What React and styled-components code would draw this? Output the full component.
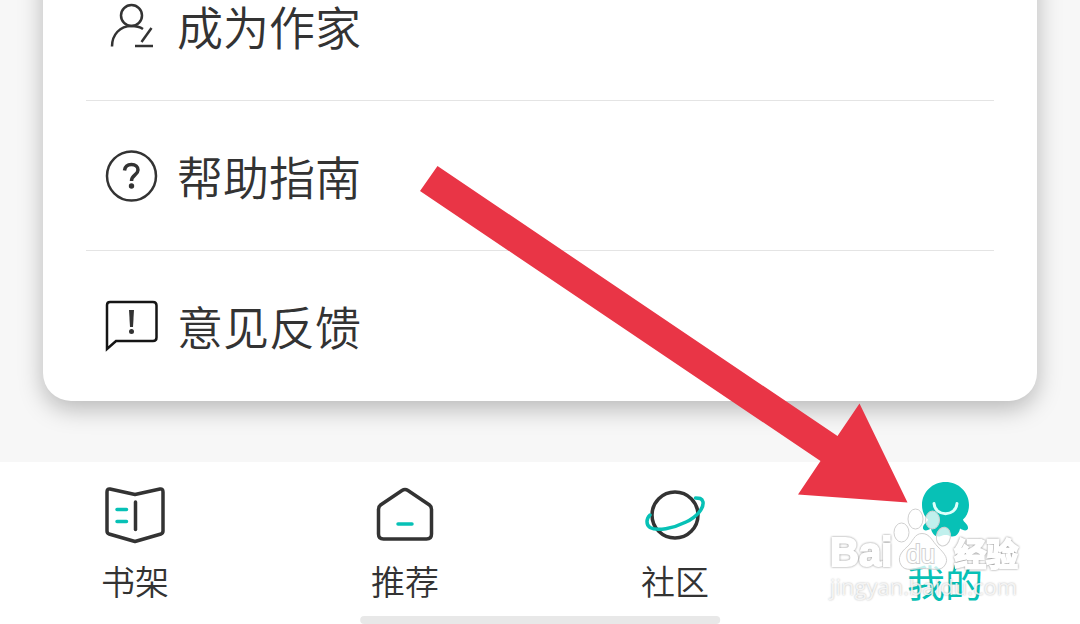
import React from "react";
import styled, { createGlobalStyle } from "styled-components";

const App = () => {
  return (
    <Page>
      <GlobalStyle />

      <Main>
        <Card>
          {menu.map((item) => (
            <MenuRow key={item.label} href="#">
              {item.icon}
              <MenuLabel>{item.label}</MenuLabel>
            </MenuRow>
          ))}
        </Card>
      </Main>

      <TabBar>
        {tabs.map((tab) => (
          <Tab key={tab.label} href="#" $active={tab.active}>
            {tab.icon}
            <span>{tab.label}</span>
          </Tab>
        ))}
        <HomeIndicator />
      </TabBar>

      <Arrow viewBox="0 0 488 340" aria-hidden="true">
        <path d="M17.500 0 L417.500 270 L439.500 237.500 L487.500 336.500 L378 328.500 L400.500 295 L0 25 Z" />
      </Arrow>

      <Watermark>
        <Brand>
          <BrandText>Bai</BrandText>
          <Paw>
            <svg viewBox="0 0 52 64" aria-hidden="true">
              <ellipse cx="9.500" cy="24.500" rx="7.500" ry="9.500" />
              <ellipse cx="23.500" cy="11" rx="7.500" ry="10" />
              <ellipse cx="40.500" cy="12" rx="7" ry="9" />
              <ellipse cx="51.500" cy="28.500" rx="7" ry="9.500" transform="rotate(10 51 28)" />
              <path d="M30 25.500 C38 25.500 40 33 46 39 C53 46 57 51 53 57 C49 64 40 60.500 31 60.500 C22 60.500 13 64 9 57 C5 50 9 44 15 39 C21 34 22 25.500 30 25.500 Z" />
            </svg>
            <span>du</span>
          </Paw>
          <BrandText $cjk>经验</BrandText>
        </Brand>
        <Site>jingyan.baidu.com</Site>
      </Watermark>
    </Page>
  );
};

export default App;

const AuthorIcon = () => (
  <LineIcon viewBox="0 0 52 52">
    <circle cx="25.500" cy="15.500" r="10.500" />
    <path d="M6 46.500 C6 34.500 14 26 25.500 26 C30 26 34 27 37 29" />
    <path d="M45.500 28 L35.500 42" />
    <path d="M29 46 H47" />
  </LineIcon>
);

const HelpIcon = () => (
  <LineIcon viewBox="0 0 52 52">
    <circle cx="25.500" cy="26" r="24.500" />
    <path
      d="M18.500 20.500 C19 16.500 22 14.500 25.500 14.500 C29.500 14.500 32 17 32 20 C32 25 25.500 25 25.500 31"
      strokeWidth="3.500"
    />
    <circle cx="25.500" cy="36" r="2.700" fill="#333" stroke="none" />
  </LineIcon>
);

const FeedbackIcon = () => (
  <LineIcon viewBox="0 0 52 52">
    <path
      d="M1 49 V5 Q1 2 4 2 H47 Q50.500 2 50.500 5.500 V37.500 Q50.500 41 47 41 H10 Z"
      stroke="#151515"
      strokeLinejoin="miter"
    />
    <path d="M23 10 H28 L27 27 H24 Z" fill="#333" stroke="none" />
    <circle cx="25.500" cy="31.500" r="2.500" fill="#333" stroke="none" />
  </LineIcon>
);

const ShelfIcon = () => (
  <TabIcon viewBox="0 0 64 64">
    <path d="M4 9 Q4 5.500 7 6 L32 11.500 L57 6 Q60 5.500 60 9 V48 Q60 50 58 51 L32 58.500 L6 51 Q4 50 4 48 Z" />
    <path d="M32.500 19 V46.500" />
    <path d="M14 26.500 H23.500 M14 38.500 H23.500" stroke={TEAL} />
  </TabIcon>
);

const HouseIcon = () => (
  <TabIcon viewBox="0 0 64 64">
    <path d="M29 7.500 Q32 5.500 35 7.500 L56.500 22 Q58.500 23.500 58.500 26.500 V51 Q58.500 56 53.500 56 H10.500 Q5.500 56 5.500 51 V26.500 Q5.500 23.500 7.500 22 Z" />
    <path d="M25 41 H39" stroke={TEAL} />
  </TabIcon>
);

const PlanetIcon = () => (
  <TabIcon viewBox="0 0 64 64">
    <circle cx="32" cy="32" r="23" />
    <path
      d="M7 32 C3 36 3 42 7 44.500 C14 48.500 30 45.500 43 39 C54 34 61 25 60 19 C59 15 56 15 52.500 15"
      stroke={TEAL}
    />
  </TabIcon>
);

const MascotIcon = () => (
  <TabIcon viewBox="0 0 64 64">
    <path
      d="M32.500 -1 C45.500 -1 56 9 56 22 C56 28 54 33 50 36.500 C50.500 39.500 55.500 41 55 45.500 C54 48.500 50 47.500 47 45.500 C46 51 42 55 37 53 C35 51.500 30 51.500 28 53 C23 55 19 51 18 45.500 C15 47.500 11 48.500 10 45.500 C9.500 41 14.500 39.500 15 36.500 C11 33 9 28 9 22 C9 9 19.500 -1 32.500 -1 Z"
      fill={TEAL}
      stroke="none"
    />
    <path d="M21 20.500 C22 34 43 34 44 20.500" stroke="#dcfffb" strokeWidth="3" />
  </TabIcon>
);

const TEAL = "#07c1b6";

const menu = [
  { label: "成为作家", icon: <AuthorIcon /> },
  { label: "帮助指南", icon: <HelpIcon /> },
  { label: "意见反馈", icon: <FeedbackIcon /> },
];

const tabs = [
  { label: "书架", icon: <ShelfIcon /> },
  { label: "推荐", icon: <HouseIcon /> },
  { label: "社区", icon: <PlanetIcon /> },
  { label: "我的", icon: <MascotIcon />, active: true },
];

const GlobalStyle = createGlobalStyle`
  * {
    box-sizing: border-box;
  }
  body {
    margin: 0;
    background: #f7f7f7;
    color: #333;
    font-family: "Noto Sans CJK SC", sans-serif;
    font-weight: 350;
  }
  a {
    color: inherit;
    text-decoration: none;
  }
`;

const Page = styled.div`
  position: relative;
  display: flex;
  flex-direction: column;
  height: 100vh;
  overflow: hidden;
`;

const Main = styled.main`
  flex: 1;
  min-height: 0;
  display: flex;
  flex-direction: column;
  justify-content: flex-end;
  padding: 0 43px 61px;
  overflow: hidden;
`;

const Card = styled.div`
  flex-shrink: 0;
  padding: 0 43px;
  background: #fff;
  border-radius: 28px;
  box-shadow: 0 8px 24px rgb(0 0 0 / 26%);
`;

const MenuRow = styled.a`
  display: flex;
  align-items: center;
  gap: 19px;
  height: 150px;
  padding-left: 20px;
  border-bottom: 1px solid #e4e4e4;
  &:last-child {
    border-bottom-color: transparent;
  }
`;

const MenuLabel = styled.span`
  padding-bottom: 2px;
  font-size: 46px;
  line-height: 60px;
`;

const LineIcon = styled.svg`
  width: 52px;
  height: 52px;
  overflow: visible;
  fill: none;
  stroke: #333;
  stroke-width: 2.5;
`;

const TabBar = styled.nav`
  position: relative;
  display: grid;
  grid-template-columns: repeat(4, 1fr);
  height: 162px;
  background: #fff;
`;

const Tab = styled.a`
  display: flex;
  flex-direction: column;
  align-items: center;
  gap: 10px;
  padding-top: 21px;
  color: ${({ $active }) => ($active ? TEAL : "#333")};
  font-size: ${({ $active }) => ($active ? "38px" : "34px")};
  font-weight: ${({ $active }) => ($active ? 400 : 350)};
  line-height: 48px;
`;

const TabIcon = styled.svg`
  width: 64px;
  height: 64px;
  overflow: visible;
  fill: none;
  stroke: #333;
  stroke-width: 3.5;
  stroke-linecap: round;
  stroke-linejoin: round;
`;

const HomeIndicator = styled.div`
  position: absolute;
  bottom: 0;
  left: 50%;
  width: 33.3%;
  height: 8px;
  background: #e8e8e8;
  border-radius: 4px;
  transform: translateX(-50%);
`;

const Arrow = styled.svg`
  position: absolute;
  right: 172px;
  bottom: 118px;
  width: 488px;
  height: 340px;
  fill: #e93546;
  pointer-events: none;
`;

const Watermark = styled.div`
  position: absolute;
  right: 56px;
  bottom: 20px;
  width: 194px;
  color: rgb(255 255 255 / 80%);
  pointer-events: none;
`;

const Brand = styled.div`
  display: flex;
  align-items: flex-end;
  height: 64px;
`;

const BrandText = styled.span`
  color: #fff;
  font-family: ${({ $cjk }) =>
    $cjk ? '"Noto Sans CJK SC", sans-serif' : '"Liberation Sans", sans-serif'};
  font-size: ${({ $cjk }) => ($cjk ? "32px" : "40px")};
  font-weight: bold;
  line-height: 40px;
  -webkit-text-stroke: 2px #fff;
  paint-order: stroke fill;
  filter: drop-shadow(0 0 1px rgb(0 0 0 / 45%));
`;

const Paw = styled.div`
  position: relative;
  width: 62px;
  height: 64px;
  svg {
    width: 52px;
    height: 64px;
    overflow: visible;
    fill: rgb(255 255 255 / 75%);
    stroke: #d0d0d0;
  }
  span {
    position: absolute;
    left: 14px;
    bottom: 3px;
    color: #fff;
    font: 26px/30px "Liberation Sans", sans-serif;
    -webkit-text-stroke: 2px #d0d0d0;
    paint-order: stroke fill;
  }
`;

const Site = styled.div`
  height: 32px;
  font: 500 22px/28px "Open Sans", sans-serif;
  text-shadow: 0 0 2px rgb(0 0 0 / 30%);
`;
